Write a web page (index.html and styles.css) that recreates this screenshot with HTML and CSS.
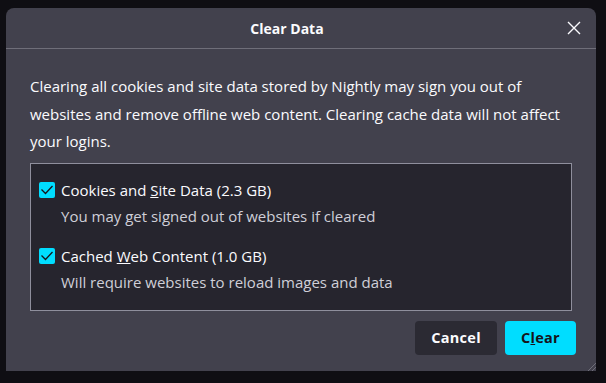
FILE: index.html
```html
<!DOCTYPE html>
<html lang="en">
<head>
    <meta charset="UTF-8">
    <title>Clear Data</title>
    <link rel="stylesheet" href="styles.css">
</head>
<body>
    <div class="dialog">
        <header class="dialog-header">
            <h1 class="dialog-title">Clear Data</h1>
            <button class="close-btn" aria-label="Close">
                <svg width="14" height="14" viewBox="0 0 14 14">
                    <path d="M1 1 L13 13 M13 1 L1 13" stroke="#fbfbfe" stroke-width="1.4" fill="none"/>
                </svg>
            </button>
        </header>

        <div class="dialog-body">
            <p class="intro">Clearing all cookies and site data stored by Nightly may sign you out of websites and remove offline web content. Clearing cache data will not affect your logins.</p>

            <div class="option-list">
                <div class="option">
                    <label class="option-row">
                        <span class="checkbox">
                            <svg width="14" height="12" viewBox="0 0 14 12"><path d="M1.5 5.5 L5.5 9.5 L12.5 2" stroke="#15141a" stroke-width="1.3" fill="none"/></svg>
                        </span>
                        <span>Cookies and <u>S</u>ite Data (2.3 GB)</span>
                    </label>
                    <div class="option-desc">You may get signed out of websites if cleared</div>
                </div>
                <div class="option">
                    <label class="option-row">
                        <span class="checkbox">
                            <svg width="14" height="12" viewBox="0 0 14 12"><path d="M1.5 5.5 L5.5 9.5 L12.5 2" stroke="#15141a" stroke-width="1.3" fill="none"/></svg>
                        </span>
                        <span>Cached <u>W</u>eb Content (1.0 GB)</span>
                    </label>
                    <div class="option-desc">Will require websites to reload images and data</div>
                </div>
            </div>
        </div>

        <footer class="dialog-buttons">
            <button class="btn btn-secondary">Cancel</button>
            <button class="btn btn-primary">C<u>l</u>ear</button>
        </footer>

        <div class="resizer"></div>
    </div>
</body>
</html>
```

FILE: styles.css
```css
body {
    margin: 0;
    background-color: #0f0e13;
    font-family: "Open Sans", "Noto Sans", sans-serif;
    color: #fbfbfe;
}

.dialog {
    position: relative;
    width: 590px;
    height: 363px;
    margin: 8px 0 0 6px;
    background-color: #42414d;
    border-radius: 8px 8px 0 0;
    display: flex;
    flex-direction: column;
}

.dialog-header {
    height: 40px;
    display: flex;
    align-items: center;
    padding-left: 10px;
    border-bottom: 1px solid #6f6e79;
}

.dialog-title {
    flex: 1;
    margin: 0;
    text-align: center;
    font-size: 14px;
    font-weight: 700;
}

.close-btn {
    width: 32px;
    height: 32px;
    margin-right: 6px;
    border: none;
    background: none;
    display: flex;
    align-items: center;
    justify-content: center;
    padding: 0;
}

.dialog-body {
    padding: 24px 24px 0;
}

.intro {
    margin: 0 0 7px;
    font-size: 15px;
    line-height: 27.5px;
}

.option-list {
    background-color: #26252e;
    border: 1px solid #8f8f9d;
    padding: 16px 8px 18px;
    display: flex;
    flex-direction: column;
    gap: 20px;
    height: 112px;
}

.option-row {
    display: flex;
    align-items: center;
    height: 20px;
    font-size: 15px;
}

.checkbox {
    width: 16px;
    height: 16px;
    margin-right: 6px;
    background-color: #00ddff;
    border-radius: 2px;
    display: flex;
    align-items: center;
    justify-content: center;
}

.option-desc {
    margin: 6px 0 0 22px;
    line-height: 20px;
    font-size: 15px;
    color: #cfcfd8;
}

.dialog-buttons {
    display: flex;
    justify-content: flex-end;
    gap: 8px;
    padding: 10px 20px 0;
}

.btn {
    height: 34px;
    border: none;
    border-radius: 4px;
    font-family: inherit;
    font-size: 14.5px;
    font-weight: 700;
    letter-spacing: 0.3px;
    padding: 0 16px;
}

.btn-secondary {
    background-color: #2b2a33;
    color: #fbfbfe;
}

.btn-primary {
    background-color: #00ddff;
    color: #15141a;
}

.resizer {
    position: absolute;
    right: 0;
    bottom: 0;
    width: 10px;
    height: 10px;
    background: repeating-linear-gradient(135deg, transparent 0 2px, #6f6e79 2px 3px);
    clip-path: polygon(100% 0, 100% 100%, 0 100%);
}
```
